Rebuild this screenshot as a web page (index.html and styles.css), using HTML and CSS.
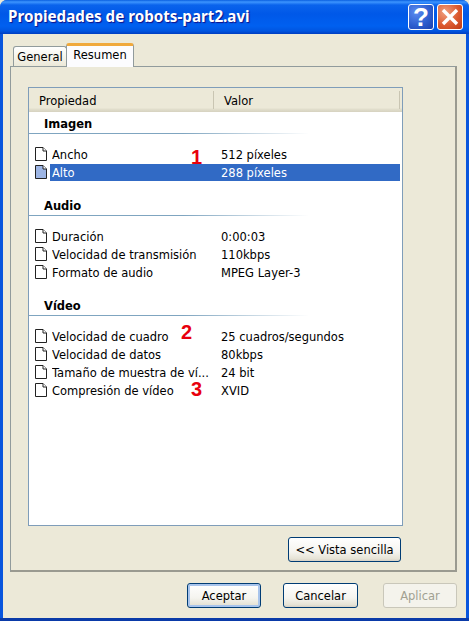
FILE: index.html
```html
<!DOCTYPE html>
<html lang="es">
<head>
<meta charset="utf-8">
<title>Propiedades de robots-part2.avi</title>
<link rel="stylesheet" href="styles.css">
</head>
<body>
<div class="window">
  <header class="titlebar">
    <h1 class="title">Propiedades de robots-part2.avi</h1>
    <div class="caption-buttons">
      <button class="cap cap-help" aria-label="Ayuda">?</button>
      <button class="cap cap-close" aria-label="Cerrar">
        <svg width="18" height="18" viewBox="0 0 18 18"><path d="M2 2 L16 16 M16 2 L2 16" stroke="#fff" stroke-width="3.4" fill="none"/></svg>
      </button>
    </div>
  </header>
  <div class="client">
    <div class="tabs">
      <div class="tab">General</div>
      <div class="tab tab-active">Resumen</div>
    </div>
    <div class="panel">
      <div class="list">
        <div class="list-head">
          <div class="col-name">Propiedad</div>
          <div class="col-value">Valor</div>
        </div>
        <section class="group">
          <h2 class="group-title">Imagen</h2>
          <div class="group-line"></div>
          <div class="row"><svg class="doc"><use href="#doc"/></svg><div class="cells"><span class="name">Ancho</span><span class="value">512 píxeles</span></div></div>
          <div class="row row-selected"><svg class="doc doc-selected"><use href="#doc"/></svg><div class="cells"><span class="name">Alto</span><span class="value">288 píxeles</span></div></div>
        </section>
        <section class="group">
          <h2 class="group-title">Audio</h2>
          <div class="group-line"></div>
          <div class="row"><svg class="doc"><use href="#doc"/></svg><div class="cells"><span class="name">Duración</span><span class="value">0:00:03</span></div></div>
          <div class="row"><svg class="doc"><use href="#doc"/></svg><div class="cells"><span class="name">Velocidad de transmisión</span><span class="value">110kbps</span></div></div>
          <div class="row"><svg class="doc"><use href="#doc"/></svg><div class="cells"><span class="name">Formato de audio</span><span class="value">MPEG Layer-3</span></div></div>
        </section>
        <section class="group">
          <h2 class="group-title">Vídeo</h2>
          <div class="group-line"></div>
          <div class="row"><svg class="doc"><use href="#doc"/></svg><div class="cells"><span class="name">Velocidad de cuadro</span><span class="value">25 cuadros/segundos</span></div></div>
          <div class="row"><svg class="doc"><use href="#doc"/></svg><div class="cells"><span class="name">Velocidad de datos</span><span class="value">80kbps</span></div></div>
          <div class="row"><svg class="doc"><use href="#doc"/></svg><div class="cells"><span class="name">Tamaño de muestra de ví...</span><span class="value">24 bit</span></div></div>
          <div class="row"><svg class="doc"><use href="#doc"/></svg><div class="cells"><span class="name">Compresión de vídeo</span><span class="value">XVID</span></div></div>
        </section>
        <span class="mark mark-1">1</span>
        <span class="mark mark-2">2</span>
        <span class="mark mark-3">3</span>
      </div>
      <div class="panel-actions">
        <button class="btn btn-wide">&lt;&lt; Vista sencilla</button>
      </div>
    </div>
    <div class="actions">
      <button class="btn btn-default">Aceptar</button>
      <button class="btn">Cancelar</button>
      <button class="btn btn-disabled" disabled>Aplicar</button>
    </div>
  </div>
</div>
<svg width="0" height="0" class="defs">
  <symbol id="doc" viewBox="0 0 12 14">
    <path d="M.5.5 H8 L11.5 4 V13.5 H.5 Z" fill="var(--doc-fill)" stroke="#222" stroke-width="1"/>
    <path d="M8 .5 V4 H11.5" fill="#fff" stroke="#222" stroke-width="1"/>
  </symbol>
</svg>
</body>
</html>
```
FILE: styles.css
```css
* { box-sizing: border-box; }
html, body { margin: 0; padding: 0; background: #ece9d8; }
body { width: 469px; height: 621px; overflow: hidden; font-family: "DejaVu Sans", sans-serif; font-size: 11.5px; color: #000; }
.defs { position: absolute; }
.window { width: 469px; height: 621px; display: flex; flex-direction: column; background: #0855dd; border-bottom: 3px solid #0a3aa8; border-radius: 7px 7px 0 0; overflow: hidden; }
.titlebar { height: 34px; flex: none; display: flex; align-items: center; justify-content: space-between; padding: 0 6px 2px 8px; background: linear-gradient(180deg, #0a5fe0 0, #3d95ff 2px, #0a63ec 5px, #0058e8 14px, #0060f0 26px, #0055e0 31px, #003dc0 34px); }
.title { margin: 0; font: bold 15.2px "Noto Sans", sans-serif; color: #fff; text-shadow: 1px 1px 1px #0f1089; white-space: nowrap; }
.caption-buttons { display: flex; gap: 3px; margin-top: 2px; }
.cap { width: 26px; height: 26px; padding: 0; border: 1px solid #fff; border-radius: 3px; color: #fff; display: flex; align-items: center; justify-content: center; font: bold 26px "Liberation Sans", sans-serif; }
.cap-help { background: radial-gradient(circle at 30% 30%, #5b8cf0 0, #2f5fd0 55%, #1b3fae 100%); }
.cap-close { background: radial-gradient(circle at 30% 30%, #f0a080 0, #dc5a30 55%, #bd3a14 100%); }
.client { flex: 1; margin: 0 3px; background: #ece9d8; padding: 9px 9px 10px 7px; display: flex; flex-direction: column; }
.tabs { height: 23px; flex: none; display: flex; align-items: flex-end; padding-left: 3px; position: relative; z-index: 1; }
.tab { height: 20px; width: 54px; padding-top: 3px; text-align: center; background: linear-gradient(180deg, #fff, #ece9d8); border: 1px solid #919b9c; border-bottom: 0; border-radius: 3px 3px 0 0; }
.tab-active { height: 24px; width: 68px; margin-left: -1px; margin-bottom: -1px; padding-top: 2px; background: #fcfcfe; border-top: 3px solid #f0a93c; }
.panel { flex: none; height: 506px; border: 1px solid #919b9c; border-width: 1px 2px 2px 1px; border-color: #919b9c #9a9a90 #9a9a90 #919b9c; padding: 20px 54px 0 17px; background: #ece9d8; display: flex; flex-direction: column; }
.list { position: relative; width: 375px; height: 439px; flex: none; background: #fff; border: 1px solid #7f9db9; padding: 0 2px 0 0; }
.list-head { height: 24px; display: flex; align-items: center; background: linear-gradient(180deg, #ece9d8 0, #ece9d8 20px, #e2dfcd 21px, #d6d2c0 24px); margin-right: -2px; }
.col-name { width: 185px; padding-left: 10px; border-right: 1px solid #c9c5b2; height: 18px; line-height: 20px; }
.col-value { width: 186px; padding-left: 10px; border-right: 1px solid #c9c5b2; height: 18px; line-height: 20px; }
.group { padding-left: 6px; }
.group + .group { margin-top: 14px; }
.group:first-of-type { padding-top: 2px; }
.group-title { margin: 0 0 0 9px; height: 18px; line-height: 20px; font-size: 11.5px; font-weight: bold; }
.group-line { height: 1px; margin: 1px 0 12px -6px; width: 280px; background: linear-gradient(90deg, #7fa5c0 0, #7fa5c0 55%, #fff 100%); }
.row { height: 18px; display: flex; align-items: flex-start; --doc-fill: #fff; }
.doc { width: 12px; height: 14px; margin-top: 1px; flex: none; }
.doc-selected { --doc-fill: #9db5e4; }
.cells { margin-left: 3px; flex: 1; display: flex; height: 17px; line-height: 19px; padding-left: 2px; }
.name { width: 169px; white-space: nowrap; overflow: hidden; }
.value { white-space: nowrap; }
.row-selected .cells { background: #316ac5; color: #fff; }
.mark { position: absolute; font: bold 20px "Liberation Sans", sans-serif; color: #e8000c; line-height: 20px; }
.mark-1 { left: 162px; top: 59px; }
.mark-2 { left: 152px; top: 234px; }
.mark-3 { left: 162px; top: 291px; }
.panel-actions { display: flex; justify-content: flex-end; margin-top: 11px; }
.btn { height: 25px; width: 74px; padding: 0; font: 11.5px "DejaVu Sans", sans-serif; color: #000; border: 1px solid #003c74; border-radius: 3px; background: linear-gradient(180deg, #fff 0, #f5f4ef 60%, #e6e3d6 90%, #d6d0c5 100%); }
.btn-wide { width: 113px; }
.btn-default { box-shadow: inset 0 0 0 2px #a8c4ec; }
.btn-disabled { background: #f4f3ec; border-color: #c9c7ba; color: #a1a192; }
.actions { display: flex; margin-top: 11px; padding-left: 177px; gap: 22px; }
.actions .btn + .btn { width: 75px; }
.actions .btn + .btn + .btn { width: 74px; margin-left: 3px; }
```
